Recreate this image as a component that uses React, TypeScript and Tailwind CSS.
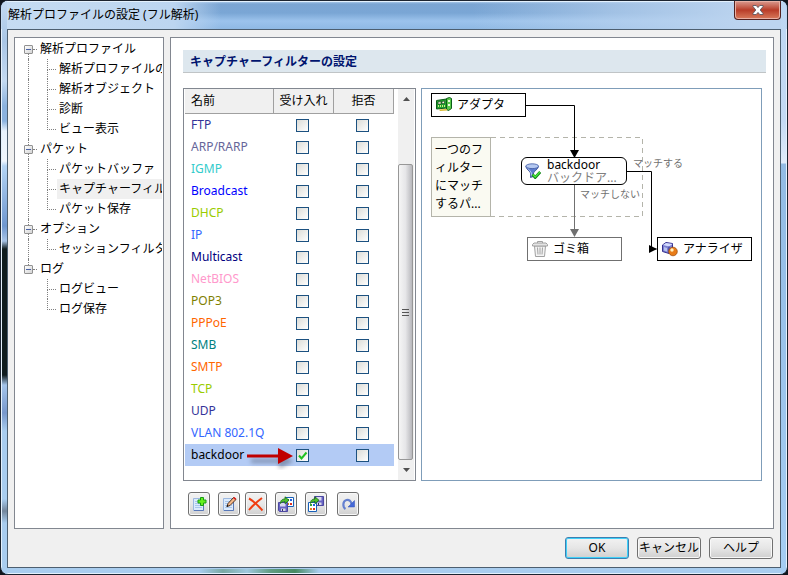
import type { ReactNode } from "react";

const TREE = [
  {
    label: "解析プロファイル",
    items: ["解析プロファイルの", "解析オブジェクト", "診断", "ビュー表示"],
  },
  { label: "パケット", items: ["パケットバッファ", "キャプチャーフィル", "パケット保存"] },
  { label: "オプション", items: ["セッションフィルタ"] },
  { label: "ログ", items: ["ログビュー", "ログ保存"] },
];

const SELECTED = "キャプチャーフィル";

const FILTERS = [
  { name: "FTP", color: "text-[#333399]" },
  { name: "ARP/RARP", color: "text-[#666699]" },
  { name: "IGMP", color: "text-[#33cccc]" },
  { name: "Broadcast", color: "text-[#0000ff]" },
  { name: "DHCP", color: "text-[#99cc00]" },
  { name: "IP", color: "text-[#3366ff]" },
  { name: "Multicast", color: "text-[#000080]" },
  { name: "NetBIOS", color: "text-[#ff99cc]" },
  { name: "POP3", color: "text-[#808000]" },
  { name: "PPPoE", color: "text-[#ff6600]" },
  { name: "SMB", color: "text-[#008080]" },
  { name: "SMTP", color: "text-[#ff6600]" },
  { name: "TCP", color: "text-[#99cc00]" },
  { name: "UDP", color: "text-[#333399]" },
  { name: "VLAN 802.1Q", color: "text-[#3366ff]" },
  { name: "backdoor", color: "text-black", accept: true },
];

function Icon({ children }: { children: ReactNode }) {
  return (
    <svg viewBox="0 0 16 16" className="size-4 shrink-0" aria-hidden="true">
      {children}
    </svg>
  );
}

function Sheet() {
  return (
    <>
      <path d="M2.500 2.500h10v12h-10z" fill="#dcebfc" stroke="#9cb8e0" />
      <path d="M4 5.500h6M4 7.500h7M4 9.500h7M4 11.500h7" stroke="#a8c6ec" />
      <path d="M12.500 3v11.500H3" fill="none" stroke="#5878b8" />
    </>
  );
}

function AddIcon() {
  return (
    <Icon>
      <Sheet />
      <path
        d="M9.500 1.500h3v2.500h2.500v3h-2.500v2.500h-3V7H7V4h2.500z"
        fill="#66f01c"
        stroke="#189c14"
      />
    </Icon>
  );
}

function EditIcon() {
  return (
    <Icon>
      <Sheet />
      <path d="M6 10.500l1-3 5.500-6 2.500 2-6 6z" fill="#f4b888" stroke="#40200c" strokeWidth=".9" />
      <path d="M12 2l2.200 1.900L15.300 2.700 13.300.900z" fill="#e01818" />
      <path d="M5.500 11l2-1-1.300-1.200z" fill="#111" />
    </Icon>
  );
}

function DeleteIcon() {
  return (
    <Icon>
      <path
        d="M1 2.500c4 2 9 7 13.500 12M14 2c-4 3-9 7-13 12"
        fill="none"
        stroke="#f03c10"
        strokeWidth="2"
      />
    </Icon>
  );
}

function Floppy() {
  return (
    <>
      <path d="M.5.5h9v9h-8l-1-1z" fill="#6864c4" stroke="#4c48a0" />
      <path d="M2 1h5.500v3.500H2z" fill="#d8d8f0" />
      <path d="M3 6.500h4.500V9H3z" fill="#d8d8e4" />
      <path d="M4 7h1v2H4z" fill="#302c70" />
    </>
  );
}

function Grid() {
  return (
    <>
      <path d="M.5.5h8v9h-8z" fill="#fff" stroke="#1860b8" />
      <path d="M2 2h2v2H2z" fill="#30a030" />
      <path d="M5 2h2v2H5z" fill="#2060e0" />
      <path d="M2 6h2v2H2z" fill="#e08020" />
      <path d="M5 6h2v2H5z" fill="#e03020" />
    </>
  );
}

function GreenArrow() {
  return (
    <path
      d="M3.500 7.500C3.500 4 5.500 3 8 3V.800l4 3.500-4 3.400V5.500c-2 0-3 .500-4.500 2z"
      fill="#50c030"
      stroke="#186818"
      strokeWidth=".8"
    />
  );
}

function ImportIcon() {
  return (
    <Icon>
      <g transform="translate(7 1)"><Grid /></g>
      <g transform="translate(0 6)"><Floppy /></g>
      <g transform="translate(-1 0)"><GreenArrow /></g>
    </Icon>
  );
}

function ExportIcon() {
  return (
    <Icon>
      <g transform="translate(6 0)"><Floppy /></g>
      <g transform="translate(0 6)"><Grid /></g>
      <g transform="translate(-1 0)"><GreenArrow /></g>
    </Icon>
  );
}

function RedoIcon() {
  return (
    <Icon>
      <path
        d="M5.500 13C2.500 11 2.500 5 6.500 4c2.500-.500 4.500 1 5 4"
        fill="none"
        stroke="#6480d0"
        strokeWidth="2.200"
      />
      <path d="M14.500 4.500v6.500H8z" fill="#4468d8" stroke="#3050b8" strokeWidth=".5" />
    </Icon>
  );
}

function AdapterIcon() {
  return (
    <Icon>
      <path d="M.5 3.500l10-1.500v9l-10 1z" fill="#20a030" stroke="#0c5c18" />
      <path d="M2 5l3-.400v2.500H2zM6 4.500l2.500-.400v2.500H6z" fill="#f4f4e0" stroke="#103810" strokeWidth=".6" />
      <path d="M2 9h7" stroke="#c8f080" strokeDasharray="1 1" strokeWidth="2" />
      <path d="M10.500 1.500l3-1 2 1v10l-3 2-2-1z" fill="#58c848" stroke="#0c5c18" />
      <path d="M12 3h2v2h-2zM12 7h2v2h-2z" fill="#e8ffe0" />
      <path d="M3 12.500l8-.500v1.500l-7 .500z" fill="#d8b830" />
    </Icon>
  );
}

function FunnelIcon() {
  return (
    <Icon>
      <path
        d="M.8 3.500c0 2 4.700 5.500 4.700 6.500v4.500l3-1V10c0-1 5-4.500 5-6.500z"
        fill="#5c7ccc"
        stroke="#304890"
        strokeWidth=".8"
      />
      <ellipse cx="7.200" cy="3.200" rx="6.400" ry="2.400" fill="#b4c8f0" stroke="#3c58a4" strokeWidth=".8" />
      <path d="M3 5.500c1 1.500 3 3 3.300 4.500v3" fill="none" stroke="#b8ccf4" />
      <path d="M7.500 11.500l2.700 3 5-5.500" fill="none" stroke="#108018" strokeWidth="2.800" />
      <path d="M7.700 11.500l2.500 2.500 4.700-5" fill="none" stroke="#48e838" strokeWidth="1.300" />
    </Icon>
  );
}

function TrashIcon() {
  return (
    <Icon>
      <path d="M2.500 5h11l-1 10.500h-9z" fill="#f4f4f4" stroke="#a0a0a0" />
      <path d="M5.500 6.500l.5 7M8 6.500v7M10.500 6.500l-.5 7" stroke="#a0a0a0" />
      <path d="M.5 3.500l1.500-1.500h12l1.500 1.500V5H.5z" fill="#e4e4e4" stroke="#a0a0a0" />
      <path d="M5.500 2V.5h5V2" fill="none" stroke="#a0a0a0" />
    </Icon>
  );
}

function AnalyzerIcon() {
  return (
    <Icon>
      <path d="M.5 4L4 1.500l6.500 1v7L7 12.500l-6.500-2z" fill="#7c80d0" stroke="#343090" />
      <path d="M1 4l6 1.500L10.500 3 4 2z" fill="#d4dcff" />
      <path d="M7 5.500v6.500" stroke="#343090" />
      <path d="M2 6v3.500l3 1V7z" fill="#b8c4f0" />
      <circle cx="11" cy="10.500" r="4.300" fill="#e87c18" stroke="#984808" strokeWidth=".7" />
      <circle cx="10" cy="9" r="1.700" fill="#fff0c0" />
    </Icon>
  );
}

function TreeView() {
  return (
    <nav
      aria-label="設定項目"
      className="w-[150px] shrink-0 overflow-hidden border border-[#828790] bg-white pt-px pr-px"
    >
      <ul>
        {TREE.map((group, g) => {
          const lastGroup = g === TREE.length - 1;
          return (
            <li key={group.label}>
              <div className="flex h-5 items-center">
                <div className="ml-[9px] flex h-5 w-[9px] flex-col items-center">
                  <span
                    className={`w-px flex-1 border-l border-dotted ${g === 0 ? "border-transparent" : "border-[#808080]"}`}
                  />
                  <button
                    type="button"
                    aria-label={`${group.label}を折りたたむ`}
                    className="flex size-[9px] items-center justify-center rounded-[1px] border border-[#919191] bg-linear-to-br from-white to-[#d4d4d4]"
                  >
                    <span className="h-px w-[5px] bg-[#4b63a7]" />
                  </button>
                  <span
                    className={`w-px flex-1 border-l border-dotted ${lastGroup ? "border-transparent" : "border-[#808080]"}`}
                  />
                </div>
                <span className="w-1 border-t border-dotted border-[#808080]" />
                <span className="ml-[3px] whitespace-nowrap">{group.label}</span>
              </div>
              <ul>
                {group.items.map((item, i) => (
                  <li key={item} className="flex h-5 items-center">
                    <span
                      className={`h-5 w-[14px] shrink-0 border-r border-dotted ${lastGroup ? "border-transparent" : "border-[#808080]"}`}
                    />
                    <span className="ml-[18px] flex h-5 w-[9px] shrink-0 flex-col">
                      <span className="h-[11px] border-b border-l border-dotted border-[#808080]" />
                      {i < group.items.length - 1 && (
                        <span className="flex-1 border-l border-dotted border-[#808080]" />
                      )}
                    </span>
                    <a
                      href="#"
                      className={`ml-px h-5 min-w-0 overflow-hidden pl-0.5 leading-5 whitespace-nowrap ${item === SELECTED ? "flex-1 bg-[#f0f0f0]" : ""}`}
                    >
                      {item}
                    </a>
                  </li>
                ))}
              </ul>
            </li>
          );
        })}
      </ul>
    </nav>
  );
}

function CheckBox({ label, checked }: { label: string; checked?: boolean }) {
  return (
    <label className="relative mx-auto block size-[13px]">
      <input
        type="checkbox"
        aria-label={label}
        defaultChecked={checked}
        className="peer block size-[13px] appearance-none border border-[#1c5180] bg-linear-to-br from-[#dcdcd7] to-white"
      />
      <svg viewBox="0 0 13 13" className="absolute inset-0 hidden size-[13px] peer-checked:block">
        <path d="M3 6.500l2.500 3L10.500 3.500" fill="none" stroke="#21c121" strokeWidth="2" />
      </svg>
    </label>
  );
}

function RedArrow() {
  return (
    <svg viewBox="0 0 60 26" className="absolute top-0 left-[60px] z-10 h-[26px] w-[60px]">
      <g fill="#505a70" opacity=".5" className="blur-[2px]">
        <path d="M6 15h28v-5l15 7-15 8v-6H6z" />
      </g>
      <path d="M2 10.500h31V4l15 8-15 8v-6.500H2z" fill="#c00000" />
    </svg>
  );
}

function FilterTable() {
  return (
    <div className="flex w-[233px] shrink-0 border border-[#828790] bg-white pl-px">
      <table className="w-[209px] table-fixed border-separate border-spacing-0 self-start">
        <thead>
          <tr className="h-[25px] bg-[#f0f0f0]">
            <th className="w-[89px] border-r border-b border-[#a0a0a0] p-0 pl-1.5 text-left font-normal">名前</th>
            <th className="w-[60px] border-r border-b border-[#a0a0a0] p-0 text-center font-normal">受け入れ</th>
            <th className="w-[60px] border-r border-b border-[#a0a0a0] p-0 text-center font-normal">拒否</th>
          </tr>
        </thead>
        <tbody>
          {FILTERS.map((f) => (
            <tr key={f.name} className={`h-[22px] ${f.accept ? "bg-[#b3cbf5]" : ""}`}>
              <td className={`relative p-0 pl-1.5 leading-5 whitespace-nowrap ${f.color}`}>
                {f.name}
                {f.accept && <RedArrow />}
              </td>
              <td className="p-0 pr-1">
                <CheckBox label={`${f.name} 受け入れ`} checked={f.accept} />
              </td>
              <td className="p-0 pr-1">
                <CheckBox label={`${f.name} 拒否`} />
              </td>
            </tr>
          ))}
        </tbody>
      </table>
      <div className="ml-1 flex w-4 flex-col bg-[#f0f0f0]">
        <button type="button" aria-label="上へ" className="flex h-5 items-center justify-center">
          <svg viewBox="0 0 7 4" className="h-1 w-[7px]">
            <path d="M3.500 0L7 4H0z" fill="#505050" />
          </svg>
        </button>
        <div className="h-[55px]" />
        <div className="flex w-[15px] flex-1 flex-col items-center justify-center gap-0.5 rounded-xs border border-[#979797] bg-linear-to-r from-[#f5f5f5] via-[#e6e6e8] to-[#b8b8bc]">
          <span className="h-px w-[7px] bg-[#555]" />
          <span className="h-px w-[7px] bg-[#555]" />
          <span className="h-px w-[7px] bg-[#555]" />
        </div>
        <button type="button" aria-label="下へ" className="flex h-5 items-center justify-center">
          <svg viewBox="0 0 7 4" className="h-1 w-[7px]">
            <path d="M0 0h7L3.500 4z" fill="#505050" />
          </svg>
        </button>
      </div>
    </div>
  );
}

function FlowCanvas() {
  return (
    <div className="relative w-[341px] shrink-0 overflow-hidden border border-[#7f9db9] bg-white">
      <svg viewBox="0 0 339 391" className="absolute top-0 left-0 h-[391px] w-[339px]" fill="none">
        <path d="M69 48.500h151.500v79H69" stroke="#b4b4aa" strokeDasharray="5 4" />
        <path d="M104 16.500h48.500V62" stroke="#000" />
        <path d="M148 61h9l-4.500 8z" fill="#000" />
        <path d="M152.500 95v46" stroke="#707070" />
        <path d="M148 140h9l-4.500 8z" fill="#707070" />
        <path d="M205 82.500h24.500v77.500h5" stroke="#000" />
        <path d="M227 156v8l8-4z" fill="#000" />
      </svg>
      <div className="absolute top-1 left-[9px] flex h-6 w-[95px] items-center gap-[5px] border border-black bg-white pl-1">
        <AdapterIcon />
        アダプタ
      </div>
      <p className="absolute top-12 left-[9px] h-20 w-[60px] border border-[#b4b4aa] bg-[#fafaf2] pt-[3px] pl-[3px] leading-[18px] whitespace-nowrap">
        一つのフ
        <br />
        ィルター
        <br />
        にマッチ
        <br />
        するパ...
      </p>
      <div className="absolute top-[68px] left-[99px] flex h-7 w-[106px] items-center gap-1.5 rounded-md border border-black bg-white pl-[3px]">
        <FunnelIcon />
        <div className="leading-[13px] whitespace-nowrap">
          <div>backdoor</div>
          <div className="text-[#808080]">バックドア...</div>
        </div>
      </div>
      <span className="absolute top-[67px] left-[211px] text-[10px] leading-[14px] whitespace-nowrap text-[#707070]">
        マッチする
      </span>
      <span className="absolute top-[98px] left-[158px] text-[10px] leading-[14px] whitespace-nowrap text-[#707070]">
        マッチしない
      </span>
      <div className="absolute top-[148px] left-[105px] flex h-6 w-[95px] items-center gap-[5px] border border-[#707070] bg-white pl-1">
        <TrashIcon />
        ゴミ箱
      </div>
      <div className="absolute top-[148px] left-[235px] flex h-6 w-[95px] items-center gap-[5px] border border-black bg-white pl-1">
        <AnalyzerIcon />
        アナライザ
      </div>
    </div>
  );
}

const TOOLS = [
  { label: "追加", icon: <AddIcon />, gap: "" },
  { label: "編集", icon: <EditIcon />, gap: "ml-2" },
  { label: "削除", icon: <DeleteIcon />, gap: "ml-[5px]" },
  { label: "インポート", icon: <ImportIcon />, gap: "ml-2" },
  { label: "エクスポート", icon: <ExportIcon />, gap: "ml-2" },
  { label: "リセット", icon: <RedoIcon />, gap: "ml-[10px]" },
];

function Toolbar() {
  return (
    <div className="mt-[11px] ml-[5px] flex">
      {TOOLS.map((tool) => (
        <button
          key={tool.label}
          type="button"
          aria-label={tool.label}
          className={`flex h-6 w-[22px] items-center justify-center rounded-[3px] border border-[#707070] bg-linear-to-b from-[#f2f2f2] via-[#e8e8e8] to-[#d0d0d0] inset-ring inset-ring-[#f8f8f8] ${tool.gap}`}
        >
          {tool.icon}
        </button>
      ))}
    </div>
  );
}

function DialogButton({ children, primary }: { children: ReactNode; primary?: boolean }) {
  return (
    <button
      type="button"
      className={`flex h-[22px] w-16 items-center justify-center rounded-[3px] border bg-linear-to-b from-[#f2f2f2] via-[#e6e6e6] to-[#cfcfcf] whitespace-nowrap ${
        primary ? "border-[#3c7fb1] inset-ring inset-ring-[#3fd0f8]" : "border-[#707070] inset-ring inset-ring-[#f8f8f8]"
      }`}
    >
      {children}
    </button>
  );
}

export default function App() {
  return (
    <div className="flex min-h-screen bg-[#10151c] font-['Noto_Sans','Noto_Sans_CJK_JP',sans-serif] text-[12px] leading-4 text-black">
      <div className="relative flex flex-1 flex-col overflow-hidden rounded-lg border border-[#1c2430] bg-[#a9cdef] px-1.5 pb-1.5 inset-ring inset-ring-[#e4f1fd]">
        {/* glass reflections along the frame */}
        <div className="absolute top-0 bottom-0 left-px w-[5px] bg-[linear-gradient(to_bottom,#c4daf1_0px,#a9c6e6_40px,#c4daf1_80px,#8bb2de_105px,#8bb2de_120px,#e8f2fc_130px,#f0f6fd_160px,#b4d4f4_165px,#6f97cf_225px,#a8c4e6_240px,#101c1e_248px,#101c1e_374px,#a4c4ea_384px,#7898cc_412px,#a9cdef_430px,#a9cdef_498px,#73869c_510px,#a9cdef_522px)]" />
        <div className="absolute top-0 right-px bottom-0 w-[5px] bg-[linear-gradient(to_bottom,#bcd6f2_0px,#c4daf4_120px,#e0ecfa_162px,#92bbe4_163px,#a5cdf3_100%)]" />
        <div className="absolute right-[468px] bottom-px left-[198px] h-1 bg-[linear-gradient(to_right,#a9cdef,#79a9a4,#9fc8de,#609c82,#468a62,#a9cdef)]" />
        <header className="-mx-1.5 flex h-7 items-start justify-between bg-[linear-gradient(to_right,#c6dcf2_0%,#bcd5f0_22%,#ffffff00_28%,#ffffff00_60%,#bcd4ef99_78%,#bcd4ef_95%),linear-gradient(to_bottom,#b8d4f0_0px,#7ba5d3_3px,#7aa6d5_12px,#9cc3ec_20px,#8fb9e4_28px)] inset-shadow-[0_1px_0_#e4f1fd]">
          <h1 className="pl-[7px] leading-[27px]">解析プロファイルの設定 (フル解析)</h1>
          <button
            type="button"
            aria-label="閉じる"
            className="mr-1.5 flex h-[19px] w-[47px] items-center justify-center rounded-b-[4px] border border-t-0 border-[#52211f] bg-linear-to-b from-[#d99a90] via-[#b83c28] to-[#d87a5c] inset-ring inset-ring-[#e8b0a4]"
          >
            <svg viewBox="0 0 12 10" className="h-2.5 w-3">
              <path
                d="M1 .5h3.200L6 2.600 7.800.5H11v1L8.200 5 11 8.500v1H7.800L6 7.400 4.200 9.500H1v-1L3.800 5 1 1.500z"
                fill="#fff"
                stroke="#4c4f5c"
                strokeWidth=".8"
              />
            </svg>
          </button>
        </header>
        <main className="relative flex flex-1 flex-col border border-[#4d5f70] bg-[#f0f0f0] px-1.5 pt-[7px] pb-2">
          <div className="flex flex-1 gap-1.5">
            <TreeView />
            <section className="flex min-w-0 flex-1 flex-col border border-[#828790] bg-white pt-3 pr-[7px] pb-3 pl-3">
              <h2 className="border-b border-[#c0c4c6] bg-[#dde7ee] pt-0.5 pl-[7px] leading-5 font-bold text-[#00146e]">
                キャプチャーフィルターの設定
              </h2>
              <div className="mt-[15px] flex flex-1 gap-[5px]">
                <FilterTable />
                <FlowCanvas />
              </div>
              <Toolbar />
            </section>
          </div>
          <footer className="mt-2 flex justify-end gap-2 pr-px">
            <DialogButton primary>OK</DialogButton>
            <DialogButton>キャンセル</DialogButton>
            <DialogButton>ヘルプ</DialogButton>
          </footer>
        </main>
      </div>
    </div>
  );
}
